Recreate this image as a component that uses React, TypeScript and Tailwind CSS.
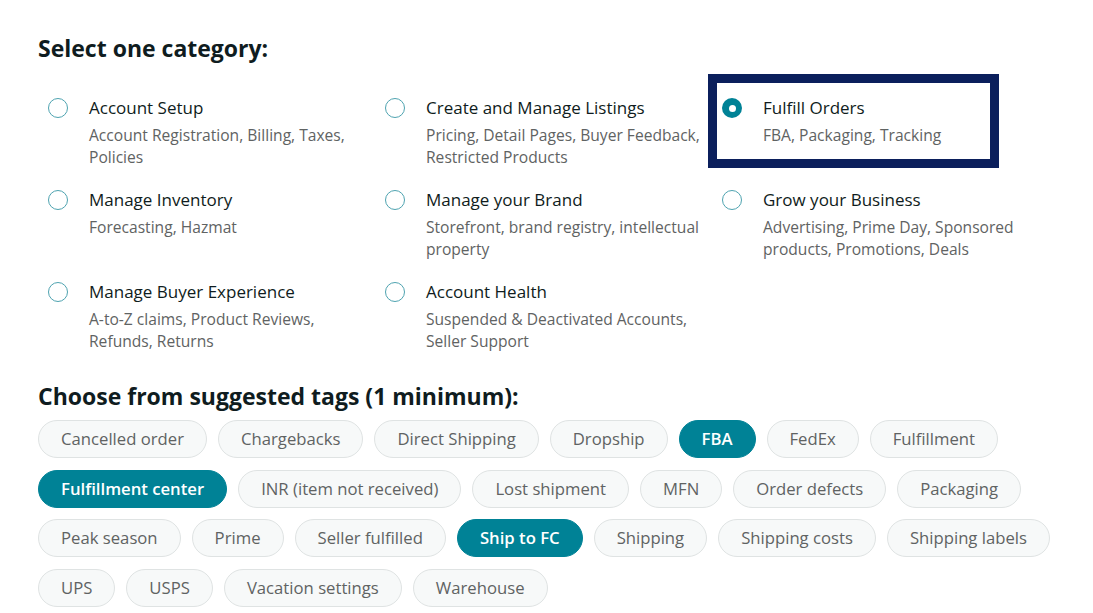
import React from "react";

// Category picker + suggested tags (help-case form)

type Category = { title: string; sub: string[]; selected?: boolean };

const categories: Category[] = [
  { title: "Account Setup", sub: ["Account Registration, Billing, Taxes,", "Policies"] },
  { title: "Create and Manage Listings", sub: ["Pricing, Detail Pages, Buyer Feedback,", "Restricted Products"] },
  { title: "Fulfill Orders", sub: ["FBA, Packaging, Tracking"], selected: true },
  { title: "Manage Inventory", sub: ["Forecasting, Hazmat"] },
  { title: "Manage your Brand", sub: ["Storefront, brand registry, intellectual", "property"] },
  { title: "Grow your Business", sub: ["Advertising, Prime Day, Sponsored", "products, Promotions, Deals"] },
  { title: "Manage Buyer Experience", sub: ["A-to-Z claims, Product Reviews,", "Refunds, Returns"] },
  { title: "Account Health", sub: ["Suspended & Deactivated Accounts,", "Seller Support"] },
];

// selected tags marked with *
const tagRows: string[][] = [
  ["Cancelled order", "Chargebacks", "Direct Shipping", "Dropship", "*FBA", "FedEx", "Fulfillment"],
  ["*Fulfillment center", "INR (item not received)", "Lost shipment", "MFN", "Order defects", "Packaging"],
  ["Peak season", "Prime", "Seller fulfilled", "*Ship to FC", "Shipping", "Shipping costs", "Shipping labels"],
  ["UPS", "USPS", "Vacation settings", "Warehouse"],
];

function Radio({ checked }: { checked?: boolean }) {
  if (checked) {
    return (
      <span className="mt-[1px] flex h-5 w-5 shrink-0 items-center justify-center rounded-full bg-[#008296]">
        <span className="h-[7px] w-[7px] rounded-full bg-white" />
      </span>
    );
  }
  return <span className="mt-[1px] h-5 w-5 shrink-0 rounded-full border-[1.5px] border-[#4ea3b0] bg-white" />;
}

function CategoryItem({ c }: { c: Category }) {
  return (
    <div className="relative flex h-[92px] gap-[21px]">
      {c.selected && (
        <div className="pointer-events-none absolute left-[-14px] top-[-23px] h-[94px] w-[291px] border-[9px] border-[#0b1f5c]" />
      )}
      <Radio checked={c.selected} />
      <div className="flex flex-col">
        <span className="text-[17px] leading-[22px] text-[#0f1c20]">{c.title}</span>
        <div className="mt-[5px] flex flex-col text-[15.6px] leading-[22px] text-[#5f6363]">
          {c.sub.map((s) => (
            <span key={s}>{s}</span>
          ))}
        </div>
      </div>
    </div>
  );
}

function Tag({ label }: { label: string }) {
  const on = label.startsWith("*");
  const text = on ? label.slice(1) : label;
  return (
    <span
      className={
        on
          ? "flex h-[38px] items-center rounded-full border border-[#008296] bg-[#008296] px-[22px] text-[16.7px] font-semibold text-white"
          : "flex h-[38px] items-center rounded-full border border-[#dfe3e3] bg-[#f7f9f9] px-[22px] text-[16.7px] text-[#5f6363]"
      }
    >
      {text}
    </span>
  );
}

export default function App() {
  return (
    <div className="min-h-screen overflow-hidden bg-white pl-[38px] pt-[34px] font-['Open_Sans',sans-serif]">
      <h2 className="text-[23px] font-bold leading-[28px] text-[#0f1c20]">Select one category:</h2>

      <div className="ml-[10px] mt-[35px] grid grid-cols-[337px_337px_337px]">
        {categories.map((c) => (
          <CategoryItem key={c.title} c={c} />
        ))}
      </div>

      <h2 className="mt-[9px] text-[23px] font-bold leading-[28px] text-[#0f1c20]">
        Choose from suggested tags (1 minimum):
      </h2>

      <div className="mt-[10px] flex flex-col gap-[11.5px]">
        {tagRows.map((row, i) => (
          <div key={i} className="flex gap-[11px]">
            {row.map((t) => (
              <Tag key={t} label={t} />
            ))}
          </div>
        ))}
      </div>
    </div>
  );
}
